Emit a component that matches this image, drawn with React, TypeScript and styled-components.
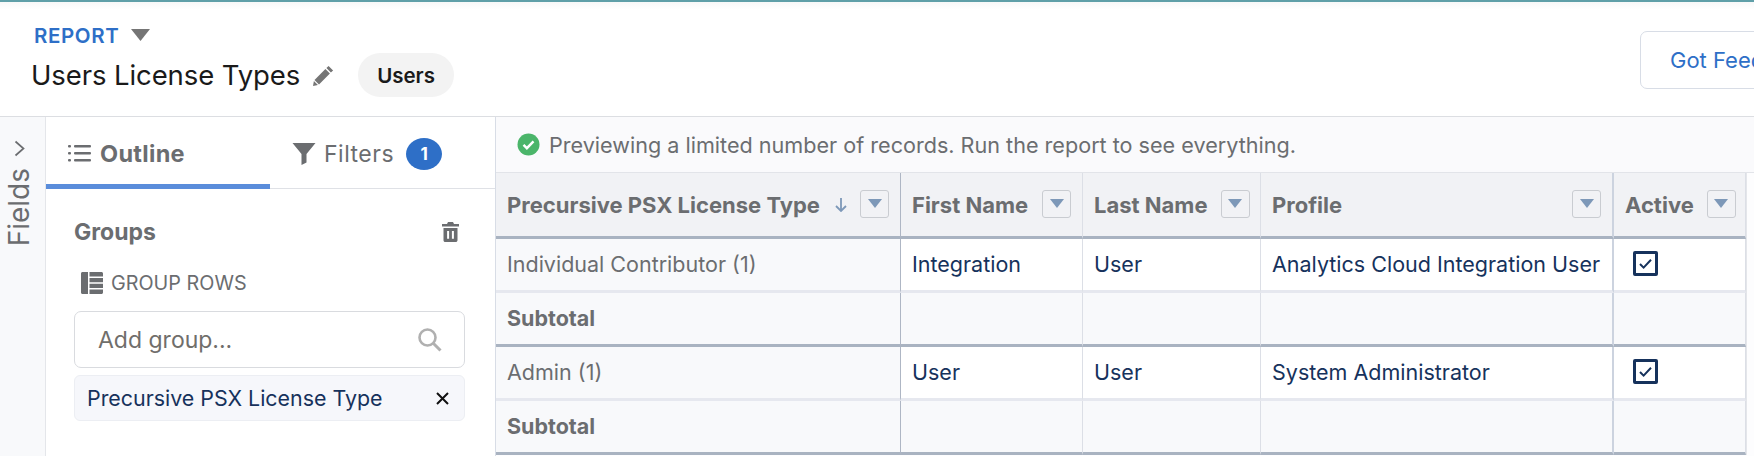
import * as React from 'react';
import styled, { createGlobalStyle } from 'styled-components';

const navy = '#16325c';
const gray = '#6b6d70';
const blue = '#2e6fc7';

const GlobalStyle = createGlobalStyle`
    html, body {
        margin: 0;
        padding: 0;
        background: #fff;
    }
    * {
        box-sizing: border-box;
    }
`;

const Page = styled.div`
    width: 1754px;
    height: 456px;
    overflow: hidden;
    border-top: 2px solid #5f9fa8;
    font-family: Inter, "Liberation Sans", sans-serif;
    display: flex;
    flex-direction: column;
`;

const Header = styled.header`
    height: 115px;
    flex: none;
    border-bottom: 1px solid #dcdee2;
    padding: 19px 0 0 31px;
    display: flex;
    justify-content: space-between;
    background: linear-gradient(#f7f8f8, #fff 8px);
`;

const TitleBlock = styled.div`
    display: flex;
    flex-direction: column;
`;

const ReportRow = styled.div`
    display: flex;
    align-items: center;
    gap: 12px;
    height: 28px;
    padding-left: 3px;
`;

const ReportLabel = styled.span`
    color: ${blue};
    font-size: 20.5px;
    font-weight: 600;
    letter-spacing: 0.6px;
`;

const TitleRow = styled.div`
    display: flex;
    align-items: center;
    margin-top: 4px;
    height: 44px;
`;

const Title = styled.h1`
    margin: 0;
    font-size: 27.5px;
    font-weight: 400;
    color: #1a1a1a;
    letter-spacing: -0.1px;
`;

const EditIcon = styled.svg`
    margin-left: 13px;
    flex: none;
`;

const Pill = styled.span`
    margin-left: 24px;
    height: 44px;
    width: 96px;
    border-radius: 22px;
    background: #f3f3f3;
    color: #1a1a1a;
    font-size: 20.5px;
    font-weight: 600;
    display: flex;
    align-items: center;
    justify-content: center;
`;

const FeedbackButton = styled.button`
    width: 200px;
    height: 58px;
    margin-top: 10px;
    margin-right: -86px;
    flex: none;
    background: #fff;
    border: 1px solid #d8dde6;
    border-radius: 7px;
    color: ${blue};
    font-family: inherit;
    font-size: 22px;
    text-align: left;
    padding: 0 0 0 29px;
    white-space: nowrap;
`;

const Body = styled.div`
    flex: 1;
    display: flex;
    min-height: 0;
`;

const Rail = styled.aside`
    width: 46px;
    flex: none;
    background: #f8f9fb;
    border-right: 1px solid #e4e6ea;
    display: flex;
    flex-direction: column;
    align-items: center;
    padding-top: 23px;
    gap: 11px;
`;

const RailChevron = styled.svg`
    margin-left: -6px;
    flex: none;
`;

const RailLabel = styled.span`
    writing-mode: vertical-rl;
    transform: rotate(180deg);
    font-size: 28px;
    color: ${gray};
    line-height: 30px;
    margin-left: -8px;
`;

const SidePanel = styled.section`
    width: 450px;
    flex: none;
    border-right: 1px solid #d8dde6;
`;

const Tabs = styled.div`
    height: 72px;
    display: flex;
`;

const Tab = styled.div<{ $active?: boolean }>`
    flex: none;
    width: ${props => props.$active ? '224px' : '225px'};
    display: flex;
    align-items: center;
    gap: ${props => props.$active ? '9px' : '8px'};
    padding: ${props => props.$active ? '5px 0 0 22px' : '2px 0 0 22px'};
    font-size: ${props => props.$active ? '23.5px' : '23px'};
    font-weight: ${props => props.$active ? 700 : 400};
    color: ${gray};
    border-bottom: ${props => props.$active ? '5px solid #5a8ddb' : '1px solid #dfe1e6'};
    letter-spacing: ${props => props.$active ? '0.3px' : '0.5px'};
`;

const Badge = styled.span`
    width: 36px;
    height: 32px;
    border-radius: 50%;
    background: ${blue};
    color: #fff;
    font-size: 17px;
    font-weight: 700;
    letter-spacing: 0;
    display: flex;
    align-items: center;
    justify-content: center;
    margin-left: 4px;
`;

const GroupsPanel = styled.div`
    padding: 27px 30px 0 28px;
`;

const GroupsHeader = styled.div`
    display: flex;
    align-items: center;
    justify-content: space-between;
    height: 32px;
    padding-left: 0;
    padding-right: 6px;
`;

const GroupsTitle = styled.h2`
    margin: 0;
    font-size: 23px;
    font-weight: 700;
    color: ${gray};
`;

const GroupRowsLabel = styled.div`
    margin-top: 23px;
    padding-left: 7px;
    display: flex;
    align-items: center;
    gap: 8px;
    height: 24px;
    font-size: 19.8px;
    color: ${gray};
`;

const SearchBox = styled.div`
    margin-top: 16px;
    height: 57px;
    border: 1px solid #d9dbdf;
    border-radius: 7px;
    padding: 0 22px 0 23px;
    display: flex;
    align-items: center;
    justify-content: space-between;
    font-size: 23px;
    color: #706e6b;
`;

const GroupChip = styled.div`
    margin-top: 7px;
    height: 46px;
    border: 1px solid #eceef3;
    border-radius: 6px;
    background: #f6f7fb;
    padding: 0 15px 0 12px;
    display: flex;
    align-items: center;
    justify-content: space-between;
    font-size: 21.4px;
    color: ${navy};
`;

const Main = styled.main`
    flex: 1;
    min-width: 0;
    background: #fdfdfe;
`;

const Notice = styled.div`
    height: 56px;
    padding: 0 0 0 21px;
    background: #fafafc;
    border-bottom: 1px solid #e2e4e9;
    display: flex;
    align-items: center;
    gap: 9px;
    font-size: 21.6px;
    color: ${gray};
`;

const Table = styled.table`
    width: 1250px;
    table-layout: fixed;
    border-collapse: separate;
    border-spacing: 0;
    border-right: 1px solid #e4e6ea;
`;

const dividers = {
    thin: '1px solid #dcdfe6',
    dark: '1px solid #aeb6c4',
    wide: '2px solid #ccd3df',
};

type Divider = keyof typeof dividers;

const HeadCell = styled.th<{ $divider: Divider }>`
    height: 66px;
    padding: 0 11px 0 11px;
    background: #f1f2f5;
    border-bottom: 3px solid #a9b3c1;
    border-right: ${props => dividers[props.$divider]};
    font-size: 22px;
    font-weight: 700;
    color: ${gray};
    text-align: left;
`;

const HeadInner = styled.div`
    display: flex;
    align-items: center;
    gap: 13px;
`;

const HeadText = styled.span`
    flex: 1;
    white-space: nowrap;
`;

const SortArrow = styled.svg`
    margin-left: -2px;
    flex: none;
`;

const FilterButton = styled.span`
    width: 29px;
    height: 28px;
    flex: none;
    border: 1px solid #c9ccd1;
    border-radius: 3px;
    display: flex;
    justify-content: center;
    padding-top: 8px;
    margin-bottom: 2px;

    &::before {
        content: '';
        width: 0;
        height: 0;
        border-left: 7px solid transparent;
        border-right: 7px solid transparent;
        border-top: 9px solid #7d98b8;
    }
`;

const Cell = styled.td<{ $tone: 'group' | 'data' | 'subtotal'; $last?: boolean; $divider: Divider }>`
    height: 54px;
    padding: 0 11px 2px;
    background: ${props => props.$tone === 'data' ? '#fff' : '#f8f9fb'};
    color: ${props => props.$tone === 'data' ? navy : gray};
    font-size: 21.5px;
    font-weight: ${props => props.$tone === 'subtotal' ? 700 : 400};
    border-right: ${props => dividers[props.$divider]};
    border-bottom: ${props => props.$last ? '3px solid #a9b3c1' : '3px solid #e6e8ef'};
    white-space: nowrap;
`;

const CheckBox = styled.span`
    width: 25px;
    height: 25px;
    margin-left: 8px;
    border: 3px solid ${navy};
    border-radius: 2px;
    background: #fff;
    display: flex;
    align-items: center;
    justify-content: center;
`;

const columns: { width: number; label: string; sorted?: boolean; divider: Divider }[] = [
    { width: 405, label: 'Precursive PSX License Type', sorted: true, divider: 'dark' },
    { width: 182, label: 'First Name', divider: 'thin' },
    { width: 178, label: 'Last Name', divider: 'thin' },
    { width: 353, label: 'Profile', divider: 'wide' },
    { width: 132, label: 'Active', divider: 'thin' },
];

const groups = [
    { name: 'Individual Contributor (1)', first: 'Integration', last: 'User', profile: 'Analytics Cloud Integration User' },
    { name: 'Admin (1)', first: 'User', last: 'User', profile: 'System Administrator' },
];

const Check = () => (
    <CheckBox>
        <svg width="15" height="13" viewBox="0 0 15 13" fill="none">
            <path d="M2 7l3.6 3.6L13 2.8" stroke={navy} strokeWidth="2" />
        </svg>
    </CheckBox>
);

const App = () => (
    <>
        <GlobalStyle />
        <Page>
            <Header>
                <TitleBlock>
                    <ReportRow>
                        <ReportLabel>REPORT</ReportLabel>
                        <svg width="19" height="12" viewBox="0 0 19 12">
                            <path d="M0 0h19l-9.5 12z" fill="#757575" />
                        </svg>
                    </ReportRow>
                    <TitleRow>
                        <Title>Users License Types</Title>
                        <EditIcon width="21" height="21" viewBox="0 0 21 21">
                            <path d="M15.6.9l4.5 4.5-2.2 2.2-4.5-4.5zM12.4 4l4.5 4.5L6 19.4l-4.5-4.5zM.9 16l4 4-4.9 1z" fill="#757575" />
                        </EditIcon>
                        <Pill>Users</Pill>
                    </TitleRow>
                </TitleBlock>
                <FeedbackButton>Got Feedback?</FeedbackButton>
            </Header>
            <Body>
                <Rail>
                    <RailChevron width="11" height="17" viewBox="0 0 11 17" fill="none">
                        <path d="M1.5 1.5l8 7-8 7" stroke="#6b6d70" strokeWidth="1.7" />
                    </RailChevron>
                    <RailLabel>Fields</RailLabel>
                </Rail>
                <SidePanel>
                    <Tabs>
                        <Tab $active>
                            <svg width="23" height="18" viewBox="0 0 23 18" fill="#6b6d70">
                                <rect x="0" y="1" width="3" height="2.4" rx="1" />
                                <rect x="0" y="8" width="3" height="2.4" rx="1" />
                                <rect x="0" y="15" width="3" height="2.4" rx="1" />
                                <rect x="6" y="1" width="17" height="2.4" rx="1" />
                                <rect x="6" y="8" width="17" height="2.4" rx="1" />
                                <rect x="6" y="15" width="17" height="2.4" rx="1" />
                            </svg>
                            Outline
                        </Tab>
                        <Tab>
                            <svg width="24" height="22" viewBox="0 0 24 22">
                                <path d="M.5 0h23L14.5 11v8.5l-5 2.5V11z" fill="#6b6d70" />
                            </svg>
                            Filters
                            <Badge>1</Badge>
                        </Tab>
                    </Tabs>
                    <GroupsPanel>
                        <GroupsHeader>
                            <GroupsTitle>Groups</GroupsTitle>
                            <svg width="17" height="20" viewBox="0 0 17 20">
                                <path d="M6 0h5l1 2h5v2.4H0V2h5zM1.5 6h14v12.2c0 1-.8 1.8-1.8 1.8H3.300c-1 0-1.800-.8-1.800-1.800zm3.600 3v7.800h2V9zm4.800 0v7.800h2V9z" fill="#6b6d70" fillRule="evenodd" />
                            </svg>
                        </GroupsHeader>
                        <GroupRowsLabel>
                            <svg width="22" height="22" viewBox="0 0 22 22">
                                <path d="M1.5 0H7v22H1.500C.7 22 0 21.300 0 20.500v-19C0 .7.7 0 1.500 0zM8.500 0h12c.8 0 1.500.7 1.500 1.500V4.500H8.500zM8.500 6H22v4.200H8.500zM8.500 11.700H22V16H8.500zM8.500 17.500H22v3c0 .8-.7 1.500-1.500 1.500h-12z" fill="#6b6d70" />
                            </svg>
                            GROUP ROWS
                        </GroupRowsLabel>
                        <SearchBox>
                            Add group...
                            <svg width="24" height="24" viewBox="0 0 24 24" fill="none">
                                <circle cx="9.5" cy="9.5" r="8" stroke="#b0b0b0" strokeWidth="2.6" />
                                <path d="M15.5 15.5L22.5 22.5" stroke="#b0b0b0" strokeWidth="3" />
                            </svg>
                        </SearchBox>
                        <GroupChip>
                            Precursive PSX License Type
                            <svg width="13" height="13" viewBox="0 0 13 13">
                                <path d="M1 1l11 11M12 1L1 12" stroke="#111" strokeWidth="2" />
                            </svg>
                        </GroupChip>
                    </GroupsPanel>
                </SidePanel>
                <Main>
                    <Notice>
                        <svg width="23" height="23" viewBox="0 0 23 23">
                            <circle cx="11.5" cy="11.5" r="11" fill="#4bb56a" />
                            <path d="M6.5 11.8l3.400 3.400 6.600-6.800" stroke="#fff" strokeWidth="2.4" fill="none" />
                        </svg>
                        Previewing a limited number of records. Run the report to see everything.
                    </Notice>
                    <Table>
                        <colgroup>
                            {columns.map(c => <col key={c.label} width={c.width} />)}
                        </colgroup>
                        <thead>
                            <tr>
                                {columns.map(c => (
                                    <HeadCell key={c.label} $divider={c.divider}>
                                        <HeadInner>
                                            <HeadText>{c.label}</HeadText>
                                            {c.sorted && (
                                                <SortArrow width="12" height="14" viewBox="0 0 12 14" fill="none">
                                                    <path d="M6 0v13M1 8l5 5 5-5" stroke="#7d98b8" strokeWidth="1.8" />
                                                </SortArrow>
                                            )}
                                            <FilterButton />
                                        </HeadInner>
                                    </HeadCell>
                                ))}
                            </tr>
                        </thead>
                        <tbody>
                            {groups.map(g => (
                                <React.Fragment key={g.name}>
                                    <tr>
                                        <Cell $tone="group" $divider="dark">{g.name}</Cell>
                                        <Cell $tone="data" $divider="thin">{g.first}</Cell>
                                        <Cell $tone="data" $divider="thin">{g.last}</Cell>
                                        <Cell $tone="data" $divider="wide">{g.profile}</Cell>
                                        <Cell $tone="data" $divider="thin"><Check /></Cell>
                                    </tr>
                                    <tr>
                                        <Cell $tone="subtotal" $divider="dark" $last>Subtotal</Cell>
                                        <Cell $tone="subtotal" $divider="thin" $last />
                                        <Cell $tone="subtotal" $divider="thin" $last />
                                        <Cell $tone="subtotal" $divider="wide" $last />
                                        <Cell $tone="subtotal" $divider="thin" $last />
                                    </tr>
                                </React.Fragment>
                            ))}
                        </tbody>
                    </Table>
                </Main>
            </Body>
        </Page>
    </>
);

export default App;
